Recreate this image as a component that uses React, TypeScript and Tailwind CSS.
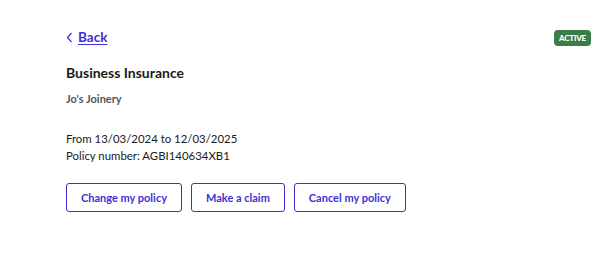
import React from "react";

const ActionButton = ({ label }: { label: string }) => (
  <button className="h-[29px] px-[14px] rounded-[3px] border border-[#3d30d6] text-[#3d30d6] text-[11px] font-bold bg-white">
    {label}
  </button>
);

export default function App() {
  return (
    <div className="w-[606px] h-[268px] bg-white text-[#1a1a1a]" style={{ fontFamily: "Lato, 'Liberation Sans', sans-serif" }}>
      <div className="pl-[66px] pr-[15px] pt-[27px]">
        <div className="flex items-start justify-between">
          <a href="#" className="flex items-center gap-[5px] text-[#3d30d6] text-[13.5px] font-bold">
            <svg width="7" height="11" viewBox="0 0 7 11" fill="none" className="mt-[1px]">
              <path d="M5.5 1L1.5 5.5L5.5 10" stroke="#3d30d6" strokeWidth="1.2" />
            </svg>
            <span className="underline underline-offset-2">Back</span>
          </a>
          <span className="mt-[3px] rounded-[4px] bg-[#3b7d45] text-white text-[8px] font-black px-[5px] py-[2px] tracking-tight">
            ACTIVE
          </span>
        </div>
        <h1 className="mt-[19px] text-[14px] font-bold leading-none">Business Insurance</h1>
        <p className="mt-[13px] text-[11px] font-bold text-[#555] leading-none">Jo's Joinery</p>
        <div className="mt-[26px] text-[11.4px] leading-[17px]">
          <p>From 13/03/2024 to 12/03/2025</p>
          <p>Policy number: AGBI140634XB1</p>
        </div>
        <div className="mt-[19px] flex gap-[9px]">
          <ActionButton label="Change my policy" />
          <ActionButton label="Make a claim" />
          <ActionButton label="Cancel my policy" />
        </div>
      </div>
    </div>
  );
}
